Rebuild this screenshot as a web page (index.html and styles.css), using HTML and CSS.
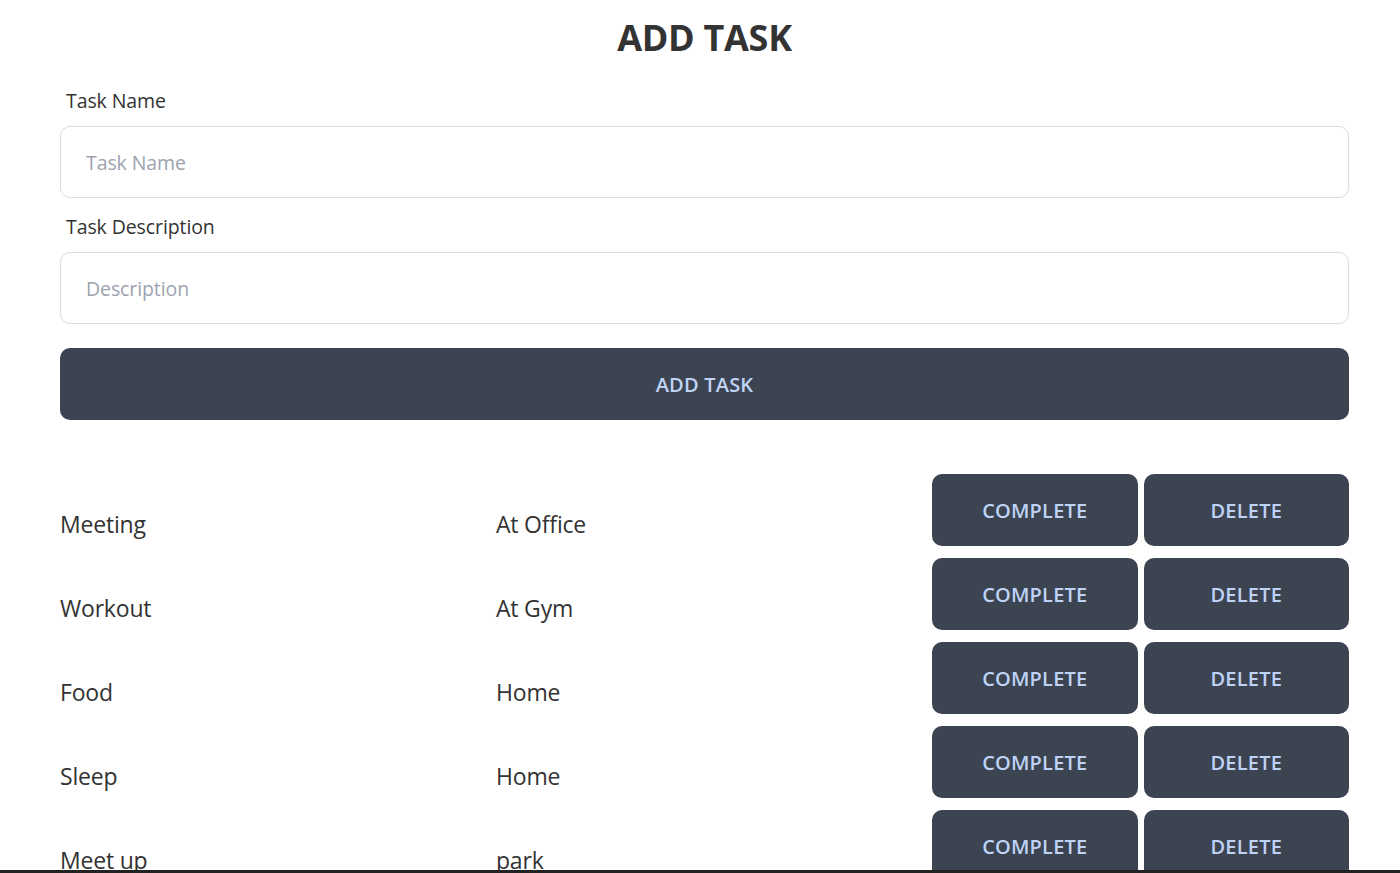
FILE: index.html
```html
<!DOCTYPE html>
<html lang="en">
<head>
<meta charset="utf-8">
<title>Tasks</title>
<link rel="stylesheet" href="styles.css">
</head>
<body>
<main class="page">
  <h1 class="title">ADD TASK</h1>
  <form class="task-form">
    <label class="field-label" for="name">Task Name</label>
    <input class="field-input" id="name" type="text" placeholder="Task Name">
    <label class="field-label" for="desc">Task Description</label>
    <input class="field-input" id="desc" type="text" placeholder="Description">
    <button class="btn btn-add" type="button">ADD TASK</button>
  </form>
  <section class="task-list">
    <div class="task-row">
      <div class="task-cell">Meeting</div>
      <div class="task-cell">At Office</div>
      <div class="task-actions"><button class="btn btn-small">COMPLETE</button><button class="btn btn-small">DELETE</button></div>
    </div>
    <div class="task-row">
      <div class="task-cell">Workout</div>
      <div class="task-cell">At Gym</div>
      <div class="task-actions"><button class="btn btn-small">COMPLETE</button><button class="btn btn-small">DELETE</button></div>
    </div>
    <div class="task-row">
      <div class="task-cell">Food</div>
      <div class="task-cell">Home</div>
      <div class="task-actions"><button class="btn btn-small">COMPLETE</button><button class="btn btn-small">DELETE</button></div>
    </div>
    <div class="task-row">
      <div class="task-cell">Sleep</div>
      <div class="task-cell">Home</div>
      <div class="task-actions"><button class="btn btn-small">COMPLETE</button><button class="btn btn-small">DELETE</button></div>
    </div>
    <div class="task-row">
      <div class="task-cell">Meet up</div>
      <div class="task-cell">park</div>
      <div class="task-actions"><button class="btn btn-small">COMPLETE</button><button class="btn btn-small">DELETE</button></div>
    </div>
  </section>
</main>
<div class="bottom-bar"></div>
</body>
</html>
```

FILE: styles.css
```css
* { box-sizing: border-box; }
html, body { margin: 0; padding: 0; background: #fff; }
body {
  font-family: "Open Sans", "Noto Sans", "Liberation Sans", sans-serif;
  color: #333;
  overflow: hidden;
}
.page {
  padding: 0 51px 0 60px;
}
.title {
  margin: 0;
  padding-top: 14px;
  height: 72px;
  text-align: center;
  font-size: 36px;
  font-weight: 700;
  line-height: 48px;
  color: #333;
  letter-spacing: -0.3px;
}
.task-form {
  display: flex;
  flex-direction: column;
}
.field-label {
  display: block;
  padding: 4px 0 0 6px;
  font-size: 19.5px;
  line-height: 50px;
  height: 54px;
  color: #333;
  letter-spacing: -0.1px;
}
.field-input {
  width: 100%;
  height: 72px;
  border: 1px solid #dcdcdc;
  border-radius: 10px;
  padding: 0 25px;
  font-family: inherit;
  font-size: 19.5px;
  color: #333;
  letter-spacing: -0.1px;
  outline: none;
  background: #fff;
}
.field-input::placeholder { color: #9ca3af; }
.btn {
  border: none;
  background: #3d4451;
  color: #bfd3f7;
  font-family: inherit;
  font-weight: 600;
  font-size: 20px;
  border-radius: 10px;
  letter-spacing: 0.2px;
  cursor: pointer;
}
.btn-add {
  margin-top: 24px;
  height: 72px;
  width: 100%;
}
.task-list {
  margin-top: 54px;
  display: flex;
  flex-direction: column;
  gap: 12px;
}
.task-row {
  display: grid;
  grid-template-columns: 1fr 1fr 1fr;
  column-gap: 19px;
  height: 72px;
}
.task-cell {
  padding-top: 34px;
  font-size: 23px;
  line-height: 32px;
  color: #333;
  letter-spacing: -0.2px;
}
.task-actions {
  display: flex;
  gap: 6px;
}
.btn-small {
  flex: 1;
  height: 72px;
}
.bottom-bar {
  position: fixed;
  left: 0;
  right: 0;
  bottom: 0;
  height: 3px;
  background: #222;
}
```
